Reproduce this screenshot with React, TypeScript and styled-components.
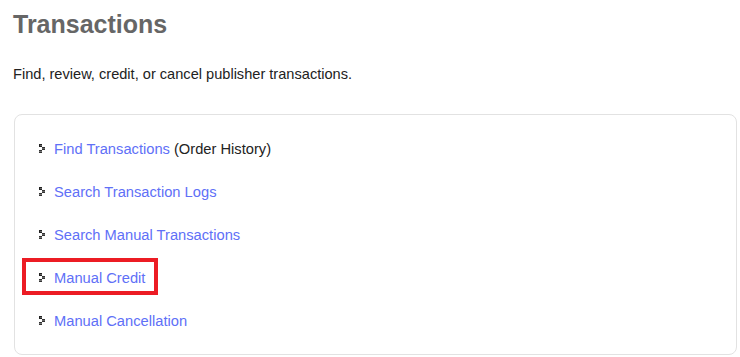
import React from 'react';
import styled, { createGlobalStyle } from 'styled-components';

const GlobalStyle = createGlobalStyle`
  html, body {
    margin: 0;
    padding: 0;
    background: #ffffff;
    font-family: "Liberation Sans", Arial, sans-serif;
  }
`;

const Page = styled.div`
  padding: 0 0 0 13px;
  width: 740px;
  height: 357px;
  box-sizing: border-box;
  overflow: hidden;
`;

const Title = styled.h1`
  margin: 0;
  padding-top: 9px;
  font-size: 25px;
  line-height: 30px;
  font-weight: bold;
  color: #666666;
`;

const Intro = styled.p`
  margin: 27px 0 0;
  font-size: 14.6px;
  line-height: 16px;
  color: #222222;
`;

const Panel = styled.ul`
  list-style: none;
  margin: 32px 0 0 1px;
  padding: 12px 0 12px 24px;
  width: 723px;
  box-sizing: border-box;
  border: 1px solid #e2e2e2;
  border-radius: 8px;
`;

const Item = styled.li<{ $marked?: boolean }>`
  position: relative;
  display: flex;
  align-items: center;
  gap: 9px;
  height: 43px;
  font-size: 14.7px;
  color: #222222;

  ${(p) =>
    p.$marked &&
    `
    &::after {
      content: '';
      position: absolute;
      left: -17px;
      top: 2px;
      width: 136px;
      height: 37px;
      box-sizing: border-box;
      border: 4px solid #ec1c24;
    }
  `}
`;

const Link = styled.a`
  color: #6070f7;
  text-decoration: none;
  cursor: pointer;
`;

const Note = styled.span`
  margin-left: 4px;
`;

const Bullet = () => (
  <svg width="6" height="9" viewBox="0 0 6 9" style={{ flex: 'none' }}>
    <rect x="0" y="0" width="3" height="3" fill="#222" />
    <rect x="3" y="3" width="3" height="3" fill="#333" />
    <rect x="0" y="6" width="3" height="3" fill="#333" />
    <rect x="1" y="1" width="2" height="1" fill="#666" />
    <rect x="3" y="4" width="3" height="1" fill="#666" />
    <rect x="0" y="7" width="3" height="1" fill="#777" />
  </svg>
);

const items = [
  { label: 'Find Transactions', note: '(Order History)' },
  { label: 'Search Transaction Logs' },
  { label: 'Search Manual Transactions' },
  { label: 'Manual Credit', marked: true },
  { label: 'Manual Cancellation' },
];

const App = () => (
  <Page>
    <GlobalStyle />
    <Title>Transactions</Title>
    <Intro>Find, review, credit, or cancel publisher transactions.</Intro>
    <Panel>
      {items.map((it) => (
        <Item key={it.label} $marked={it.marked}>
          <Bullet />
          <span>
            <Link>{it.label}</Link>
            {it.note && <Note>{it.note}</Note>}
          </span>
        </Item>
      ))}
    </Panel>
  </Page>
);

export default App;
